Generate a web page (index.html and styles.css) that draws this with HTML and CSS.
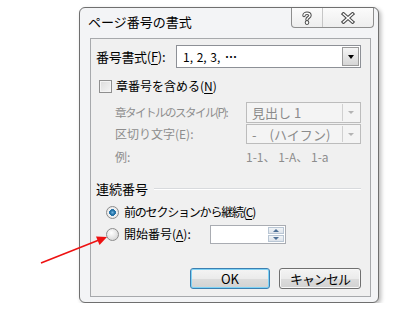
FILE: index.html
```html
<!DOCTYPE html>
<html lang="ja">
<head>
<meta charset="UTF-8">
<meta name="viewport" content="width=device-width, initial-scale=1.0">
<title>ページ番号の書式</title>
<link rel="stylesheet" href="styles.css">
</head>
<body>
<div class="dialog">
    <div class="titlebar">
        <span class="title">ページ番号の書式</span>
        <div class="caption-btns">
            <span class="cap cap-help">
                <svg width="12" height="14" viewBox="0 0 12 14">
                    <g fill="none" stroke-linecap="round">
                        <path d="M3 4.5 C3 1.5 9 1.5 9 4.5 C9 6.5 6 6.5 6 8.5" stroke="#4c4c4c" stroke-width="3.4"/>
                        <circle cx="6" cy="11.6" r="0.6" stroke="#4c4c4c" stroke-width="3.4"/>
                        <path d="M3 4.5 C3 1.5 9 1.5 9 4.5 C9 6.5 6 6.5 6 8.5" stroke="#fff" stroke-width="1.4"/>
                        <circle cx="6" cy="11.6" r="0.6" stroke="#fff" stroke-width="1.4"/>
                    </g>
                </svg>
            </span>
            <span class="cap cap-close">
                <svg width="14" height="12" viewBox="0 0 14 12">
                    <g fill="none" stroke-linecap="square">
                        <path d="M2.5 2 L11.5 10 M11.5 2 L2.5 10" stroke="#4c4c4c" stroke-width="3.6"/>
                        <path d="M2.5 2 L11.5 10 M11.5 2 L2.5 10" stroke="#fff" stroke-width="1.5"/>
                    </g>
                </svg>
            </span>
        </div>
    </div>
    <div class="client">
        <div class="row row-format">
            <span class="lbl-main">番号書式(<u>F</u>):</span>
            <div class="combo combo-main">
                <span class="combo-val">1, 2, 3, <span class="dots">･･･</span></span>
                <span class="drop"><i class="tri"></i></span>
            </div>
        </div>
        <div class="row row-check">
            <span class="checkbox"></span>
            <span>章番号を含める(<u>N</u>)</span>
        </div>
        <div class="row row-sub row-style">
            <span class="lbl-sub"><span class="lbl-small">章タイトルのスタイル(P):</span></span>
            <div class="combo combo-off">
                <span class="combo-val">見出し 1</span>
                <span class="drop"><i class="tri"></i></span>
            </div>
        </div>
        <div class="row row-sub row-sep">
            <span class="lbl-sub">区切り文字(E):</span>
            <div class="combo combo-off">
                <span class="combo-val">-　(ハイフン)</span>
                <span class="drop"><i class="tri"></i></span>
            </div>
        </div>
        <div class="row row-sub row-example">
            <span class="lbl-sub">例:</span>
            <span>1-1、 1-A、 1-a</span>
        </div>
        <div class="group-head">
            <span>連続番号</span>
            <span class="group-line"></span>
        </div>
        <div class="row row-continue">
            <span class="radio radio-on"></span>
            <span class="lbl-tight">前のセクションから継続(<u>C</u>)</span>
        </div>
        <div class="row row-start">
            <span class="radio"></span>
            <span class="lbl-start">開始番号(<u>A</u>):</span>
            <div class="spin">
                <span class="spin-btns">
                    <span class="spin-btn"><i class="tri-up"></i></span>
                    <span class="spin-btn"><i class="tri-down"></i></span>
                </span>
            </div>
        </div>
        <div class="buttons">
            <button class="btn btn-default">OK</button>
            <button class="btn btn-cancel">キャンセル</button>
        </div>
    </div>
</div>
<svg class="arrow" width="395" height="313" viewBox="0 0 395 313">
    <line x1="41" y1="263" x2="99" y2="240" stroke="#ee1111" stroke-width="1.6"/>
    <polygon points="107,237 96,236.5 99.5,245" fill="#ee1111"/>
</svg>
</body>
</html>
```

FILE: styles.css
```css
body {
    margin: 0;
    background: #fff;
    font: 12px/1 "Noto Sans CJK JP", "Liberation Sans", sans-serif;
    color: #000;
}
u {
    text-decoration: underline;
    text-underline-offset: 2px;
}
.dialog {
    box-sizing: border-box;
    width: 300px;
    height: 296px;
    margin: 7px 0 0 79px;
    padding: 0 7px 6px 10px;
    background: #f3f4f6;
    border: 1px solid #6f6f6f;
    border-radius: 6px;
    box-shadow: 2px 2px 4px rgba(0, 0, 0, .28);
}
.titlebar {
    display: flex;
    justify-content: space-between;
    height: 30px;
}
.title {
    font-size: 13px;
    line-height: 28px;
    margin-left: -2px;
}
.caption-btns {
    display: flex;
    height: 19px;
    margin-right: -3px;
    border: 1px solid #8e8e8e;
    border-top: 0;
    border-radius: 0 0 4px 4px;
    background: linear-gradient(#fbfbfb, #eeeeee);
}
.cap {
    display: flex;
    align-items: center;
    justify-content: center;
}
.cap-help {
    width: 30px;
    border-right: 1px solid #c6c6c6;
}
.cap-close {
    width: 50px;
}
.client {
    box-sizing: border-box;
    height: 259px;
    padding: 6px 9px 0 5px;
    background: #f0f0f0;
    border: 1px solid #a7a9ac;
    display: flex;
    flex-direction: column;
}
.row {
    display: flex;
    align-items: center;
    height: 20px;
    white-space: nowrap;
}
.row-format {
    height: 23px;
}
.lbl-main {
    width: 80px;
    font-size: 13px;
    letter-spacing: -0.3px;
}
.row-check {
    height: 22px;
    margin-top: 7px;
}
.checkbox {
    box-sizing: border-box;
    width: 13px;
    height: 13px;
    margin: 0 4px 0 3px;
    border: 1px solid #8f8f8f;
    background: linear-gradient(135deg, #dcdcdc, #f6f6f6);
    box-shadow: inset 0 0 0 1px #f4f4f4;
}
.row-sub {
    padding-left: 19px;
    color: #8d8d8d;
}
.row-style {
    height: 21px;
    margin-top: 5px;
}
.row-sep {
    margin-top: 1px;
}
.row-example {
    margin-top: 3px;
}
.lbl-sub {
    flex-shrink: 0;
    width: 131px;
}
.lbl-tight {
    letter-spacing: -1.2px;
}
.lbl-small {
    display: inline-block;
    font-size: 11.5px;
    letter-spacing: -1.5px;
}
.combo {
    box-sizing: border-box;
    flex: 1;
    height: 100%;
    display: flex;
    align-items: center;
    justify-content: space-between;
    padding: 0 1px 0 6px;
    border: 1px solid #a5a5a5;
}
.combo-main {
    background: #fff;
    border-color: #8d9096;
}
.combo-main .combo-val {
    word-spacing: 1px;
}
.dots {
    letter-spacing: -2px;
}
.combo-off {
    background: #f4f4f4;
    border-color: #bcbcbc;
    color: #8b8b8b;
    font-size: 13px;
    padding-left: 5px;
}
.drop {
    box-sizing: border-box;
    width: 17px;
    height: calc(100% - 2px);
    display: flex;
    align-items: center;
    justify-content: center;
}
.combo-main .drop {
    border: 1px solid #9a9a9a;
    background: linear-gradient(#f5f5f5, #d6d6d6);
}
.combo-off .drop {
    border-left: 1px solid #d0d0d0;
}
.tri {
    width: 0;
    height: 0;
    border-left: 3.5px solid transparent;
    border-right: 3.5px solid transparent;
    border-top: 4px solid #000;
}
.combo-off .tri {
    border-top-color: #b4b4b4;
    border-left-width: 3px;
    border-right-width: 3px;
    border-top-width: 3px;
}
.group-head {
    display: flex;
    align-items: center;
    height: 20px;
    margin-top: 11px;
    font-size: 13px;
}
.group-line {
    flex: 1;
    height: 1px;
    margin: 2px 0 0 6px;
    background: #d8dadd;
    border-bottom: 1px solid #fff;
}
.row-continue {
    margin-top: 4px;
}
.row-start {
    margin-top: 2px;
}
.radio {
    box-sizing: border-box;
    width: 13px;
    height: 13px;
    margin: 0 5px 0 10px;
    border-radius: 50%;
    border: 1px solid #8c8c8c;
    background: radial-gradient(circle at 40% 35%, #ffffff, #dcdcdc 70%);
}
.radio-on {
    background: radial-gradient(circle, #6fb3e0 0, #1c6a9e 2.5px, #2f7bb0 3.3px, #f3f3f3 3.6px, #dcdcdc 100%);
}
.lbl-start {
    width: 86px;
}
.spin {
    box-sizing: border-box;
    width: 76px;
    height: 19px;
    display: flex;
    justify-content: flex-end;
    padding: 1px;
    background: #fff;
    border: 1px solid #a9acb2;
}
.spin-btns {
    width: 16px;
    display: flex;
    flex-direction: column;
    gap: 1px;
}
.spin-btn {
    flex: 1;
    display: flex;
    align-items: center;
    justify-content: center;
    border: 1px solid #b9c6d4;
    background: linear-gradient(#f1f4f7, #dde3ea);
}
.tri-up,
.tri-down {
    width: 0;
    height: 0;
    border-left: 3px solid transparent;
    border-right: 3px solid transparent;
}
.tri-up {
    border-bottom: 3px solid #4d6f95;
}
.tri-down {
    border-top: 3px solid #4d6f95;
}
.buttons {
    display: flex;
    justify-content: flex-end;
    gap: 9px;
    margin-top: 24px;
}
.btn {
    box-sizing: border-box;
    height: 21px;
    padding: 0;
    font: 13px/1 "Noto Sans CJK JP", "Liberation Sans", sans-serif;
    color: #000;
    border-radius: 3px;
    background: linear-gradient(#f4f4f4 0, #ebebeb 50%, #dcdcdc 51%, #d2d2d2 100%);
}
.btn-default {
    width: 80px;
    border: 1px solid #3c7fb1;
    box-shadow: inset 0 0 0 1px #7fd3f6;
}
.btn-cancel {
    width: 82px;
    border: 1px solid #707070;
    letter-spacing: -1px;
    box-shadow: inset 0 0 0 1px #f8f8f8;
}
.arrow {
    position: absolute;
    left: 0;
    top: 0;
}
```
